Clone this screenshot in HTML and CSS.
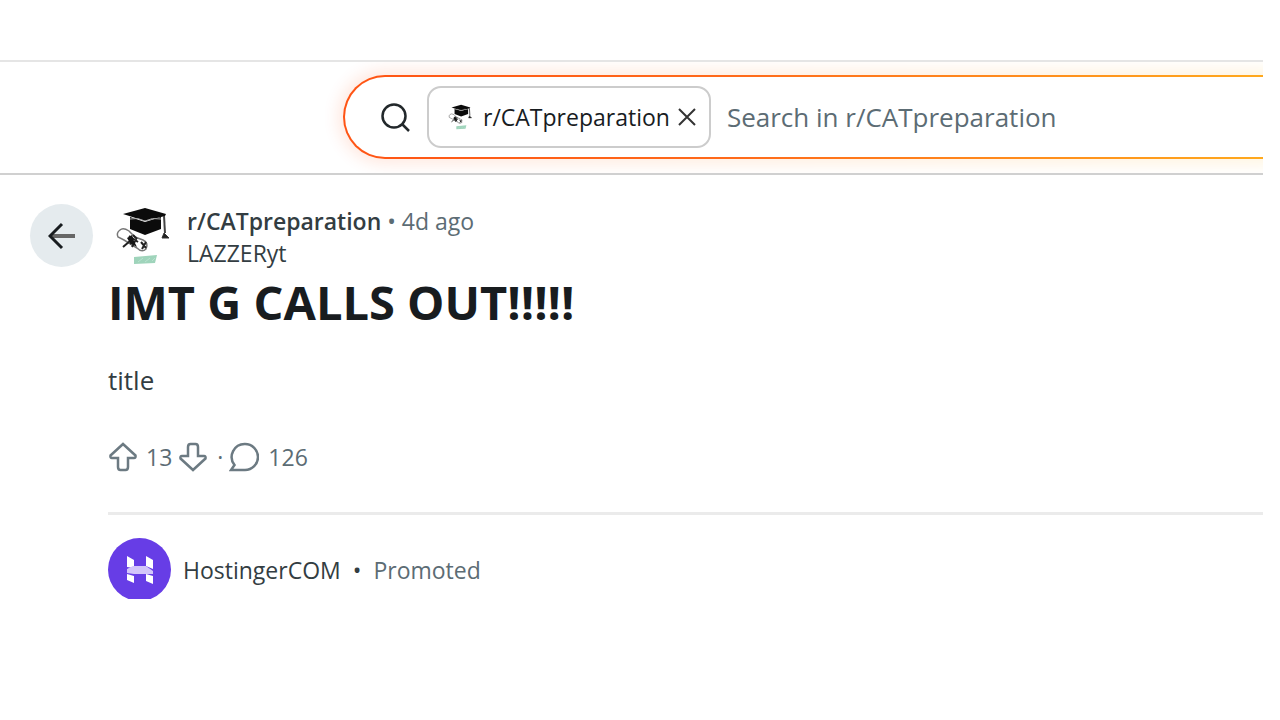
FILE: index.html
```
<!DOCTYPE html>
<html lang="en">
  <head>
    <meta charset="UTF-8" />
    <meta name="viewport" content="width=device-width, initial-scale=1.0" />
    <title>IMT G CALLS OUT!!!!! : r/CATpreparation</title>
    <link rel="stylesheet" href="styles.css">
  </head>
  <body>
    <!-- shared community icon -->
    <svg class="defs" aria-hidden="true">
      <symbol id="grad-cap" viewBox="0 0 64 64">
        <path d="M8 10 L30 4 L51 10 L50 12 L30 17 Z" fill="#0b0b0b" />
        <path d="M15 13 L30 18 L46 13 L46 25 L30 31 L15 25 Z" fill="#0b0b0b" />
        <path d="M15 15 Q23 13 30 17 Q37 13 46 15" fill="none" stroke="#aaa" stroke-width="1" />
        <path d="M49 12 L50 29" stroke="#444" stroke-width="2" />
        <path d="M49 29 L54 34 L47 34 Z" fill="#222" stroke="#333" />
        <path d="M5 26 Q1 29 3 33 L9 36 L22 44 Q27 49 31 45 Q34 39 28 36 L20 33 L14 27 Q8 23 5 26 Z" fill="#fff" stroke="#777" stroke-width="1.5" />
        <path d="M14 32 L23 38 M17 43 L20 37 L15 40 M8 43 L15 37 M26 38 L31 44 M27 45 L31 38 M18 31 L22 35" stroke="#222" stroke-width="2" fill="none" />
        <path d="M12 34 L17 31 L19 37 L22 43 L15 39 Z" fill="#151515" />
        <path d="M19 53 L42 51 L40 59 L19 60 Z" fill="#9fd4bb" />
        <path d="M23 58 L28 54 M30 58 L35 54 M37 57 L40 54" stroke="#b9e2cf" stroke-width="1" />
      </symbol>
    </svg>

    <div class="page">
      <header class="topbar">
        <form class="search" role="search">
          <svg class="search-icon" viewBox="0 0 30 30" aria-hidden="true">
            <circle cx="14" cy="14" r="11.5" />
            <path d="M22 22 L29 29" />
          </svg>
          <span class="chip">
            <svg class="chip-avatar" aria-hidden="true"><use href="#grad-cap" /></svg>
            <span>r/CATpreparation</span>
            <button type="button" class="chip-close" aria-label="Remove filter">
              <svg viewBox="0 0 18 18"><path d="M1 1 L17 17 M17 1 L1 17" /></svg>
            </button>
          </span>
          <input type="search" class="search-input" aria-label="Search" placeholder="Search in r/CATpreparation" />
        </form>
      </header>

      <main class="content">
        <button type="button" class="back" aria-label="Back">
          <svg viewBox="0 0 28 28"><path class="shaft" d="M4 14 L27 14" /><path d="M14 2 L2 14 L14 26" /></svg>
        </button>

        <article class="post">
          <div class="post-head">
            <svg class="avatar" aria-hidden="true"><use href="#grad-cap" /></svg>
            <div class="byline">
              <div><a href="#" class="community">r/CATpreparation</a> <span class="muted">• 4d ago</span></div>
              <a href="#" class="author">LAZZERyt</a>
            </div>
          </div>
          <h1>IMT G CALLS OUT!!!!!</h1>
          <p class="post-body">title</p>

          <div class="actions">
            <button type="button" aria-label="Upvote">
              <svg viewBox="0 0 30 30"><path d="M15 2 L27.500 13.500 Q28 16 26 16 H20 V25 Q20 28 17.500 28 H12.500 Q10 28 10 25 V16 H4 Q2 16 2.500 13.500 Z" /></svg>
            </button>
            <span class="score">13</span>
            <button type="button" aria-label="Downvote">
              <svg viewBox="0 0 30 30"><path d="M15 28 L27.500 16.500 Q28 14 26 14 H20 V5 Q20 2 17.500 2 H12.500 Q10 2 10 5 V14 H4 Q2 14 2.500 16.500 Z" /></svg>
            </button>
            <span class="dot">·</span>
            <button type="button" class="comments">
              <svg viewBox="0 0 30 30"><path d="M16 2 A12.500 12.500 0 1 1 16 28 H2 L5.500 23 A13 13 0 0 1 16 2 Z" /></svg>
              126
            </button>
          </div>

          <section class="promo">
            <svg class="promo-logo" viewBox="0 0 63 63" aria-hidden="true">
              <circle cx="31.5" cy="31.5" r="31.5" fill="#673de6" />
              <path d="M19 18 L26 22 V30 L19 29 Z M38 18 L45 22 V31 L38 28 Z M19 36 L26 38 V45 L19 42 Z M38 36 L45 38 V46 L38 43 Z" fill="#fff" />
              <path d="M19 31 L25 28 H38 L45 33 V36 H26 L19 35 Z" fill="#d3c5fa" />
            </svg>
            <a href="#" class="sponsor">HostingerCOM</a>
            <span class="promo-dot">•</span>
            <span class="muted">Promoted</span>
          </section>
        </article>
      </main>
    </div>
  </body>
</html>
```
FILE: styles.css
```
* {
  box-sizing: border-box;
}

body {
  font-family: "Open Sans", "Noto Sans", sans-serif;
  font-size: 23px;
  line-height: 32px;
  margin: 0;
  background-color: #fff;
  color: #333d42;
}

button {
  padding: 0;
  border: none;
  background: none;
  font: inherit;
  color: inherit;
  cursor: pointer;
}

a {
  color: inherit;
  text-decoration: none;
}

svg {
  display: block;
  fill: none;
}

.defs {
  position: absolute;
  width: 0;
  height: 0;
}

.page {
  margin-right: 17px;
  padding-top: 60px;
}

/* Top bar */
.topbar {
  border-top: 2px solid #e5e5e5;
  border-bottom: 2px solid #d0d0d0;
  padding: 13px 0 14px 343px;
  overflow: hidden;
}

.search {
  position: relative;
  display: flex;
  align-items: center;
  height: 84px;
  margin-right: -60px;
  padding-left: 35px;
  border: 2px solid transparent;
  border-radius: 42px;
  background: linear-gradient(#fff, #fff) padding-box,
    linear-gradient(90deg, #ff5414, #ff6a1a 40%, #ffb01e) border-box;
}

.search::before {
  content: "";
  position: absolute;
  inset: -7px;
  z-index: -1;
  border-radius: 48px;
  background: linear-gradient(90deg, #ff4500, #ffb000);
  filter: blur(8px);
  opacity: 0.12;
}

.search-icon {
  width: 30px;
  height: 30px;
  flex-shrink: 0;
  margin-right: 17px;
  stroke: #22282b;
  stroke-width: 2.5;
}

.chip {
  display: flex;
  align-items: center;
  flex-shrink: 0;
  height: 62px;
  padding: 0 13px 0 19px;
  border: 2px solid #ccc;
  border-radius: 14px;
  color: #181c1f;
  font-weight: 500;
}

.chip-avatar {
  width: 28px;
  height: 30px;
  margin-right: 7px;
}

.chip-close {
  margin-left: 8px;
}

.chip-close svg {
  width: 18px;
  height: 18px;
  stroke: #333;
  stroke-width: 2;
}

.search-input {
  flex: 1;
  min-width: 0;
  margin-left: 16px;
  padding: 0;
  border: none;
  outline: none;
  background: none;
  font: inherit;
  font-size: 26px;
}

.search-input::placeholder {
  color: #5c6c74;
}

/* Post */
.content {
  display: flex;
  align-items: flex-start;
  padding: 29px 0 0 30px;
}

.back {
  display: flex;
  align-items: center;
  justify-content: center;
  flex-shrink: 0;
  width: 63px;
  height: 63px;
  margin-right: 15px;
  border-radius: 50%;
  background-color: #e5ebee;
}

.back svg {
  width: 28px;
  height: 28px;
  stroke: #181c1f;
  stroke-width: 3;
}

.back .shaft {
  stroke: #666;
  stroke-width: 4;
}

.post {
  flex: 1;
}

.post-head {
  display: flex;
  height: 64px;
}

.avatar {
  width: 64px;
  height: 64px;
  margin-left: 7px;
  margin-right: 8px;
}

.byline {
  padding-top: 1px;
}

.community {
  font-weight: 600;
}

.muted {
  color: #5c6c74;
}

h1 {
  margin: 2px 0 0;
  font-size: 47px;
  line-height: 64px;
  color: #181c1f;
}

.post-body {
  margin: 30px 0 0;
  font-size: 26px;
}

.actions {
  display: flex;
  align-items: center;
  height: 32px;
  margin-top: 45px;
  color: #5c6c74;
}

.actions svg {
  width: 30px;
  height: 30px;
  stroke: #6c7a82;
  stroke-width: 2.5;
}

.score {
  margin: 0 6px 0 8px;
}

.dot {
  margin: 0 6px 0 9px;
}

.comments {
  display: flex;
  align-items: center;
  gap: 9px;
}

.promo {
  display: flex;
  align-items: center;
  margin-top: 39px;
  padding-top: 23px;
  border-top: 3px solid #ebebeb;
}

/* bottom edge of the logo is cut off */
.promo-logo {
  width: 63px;
  height: 63px;
  margin-right: 12px;
  clip-path: inset(0 0 2px);
}

.promo-dot {
  margin: 0 12px;
}
```
